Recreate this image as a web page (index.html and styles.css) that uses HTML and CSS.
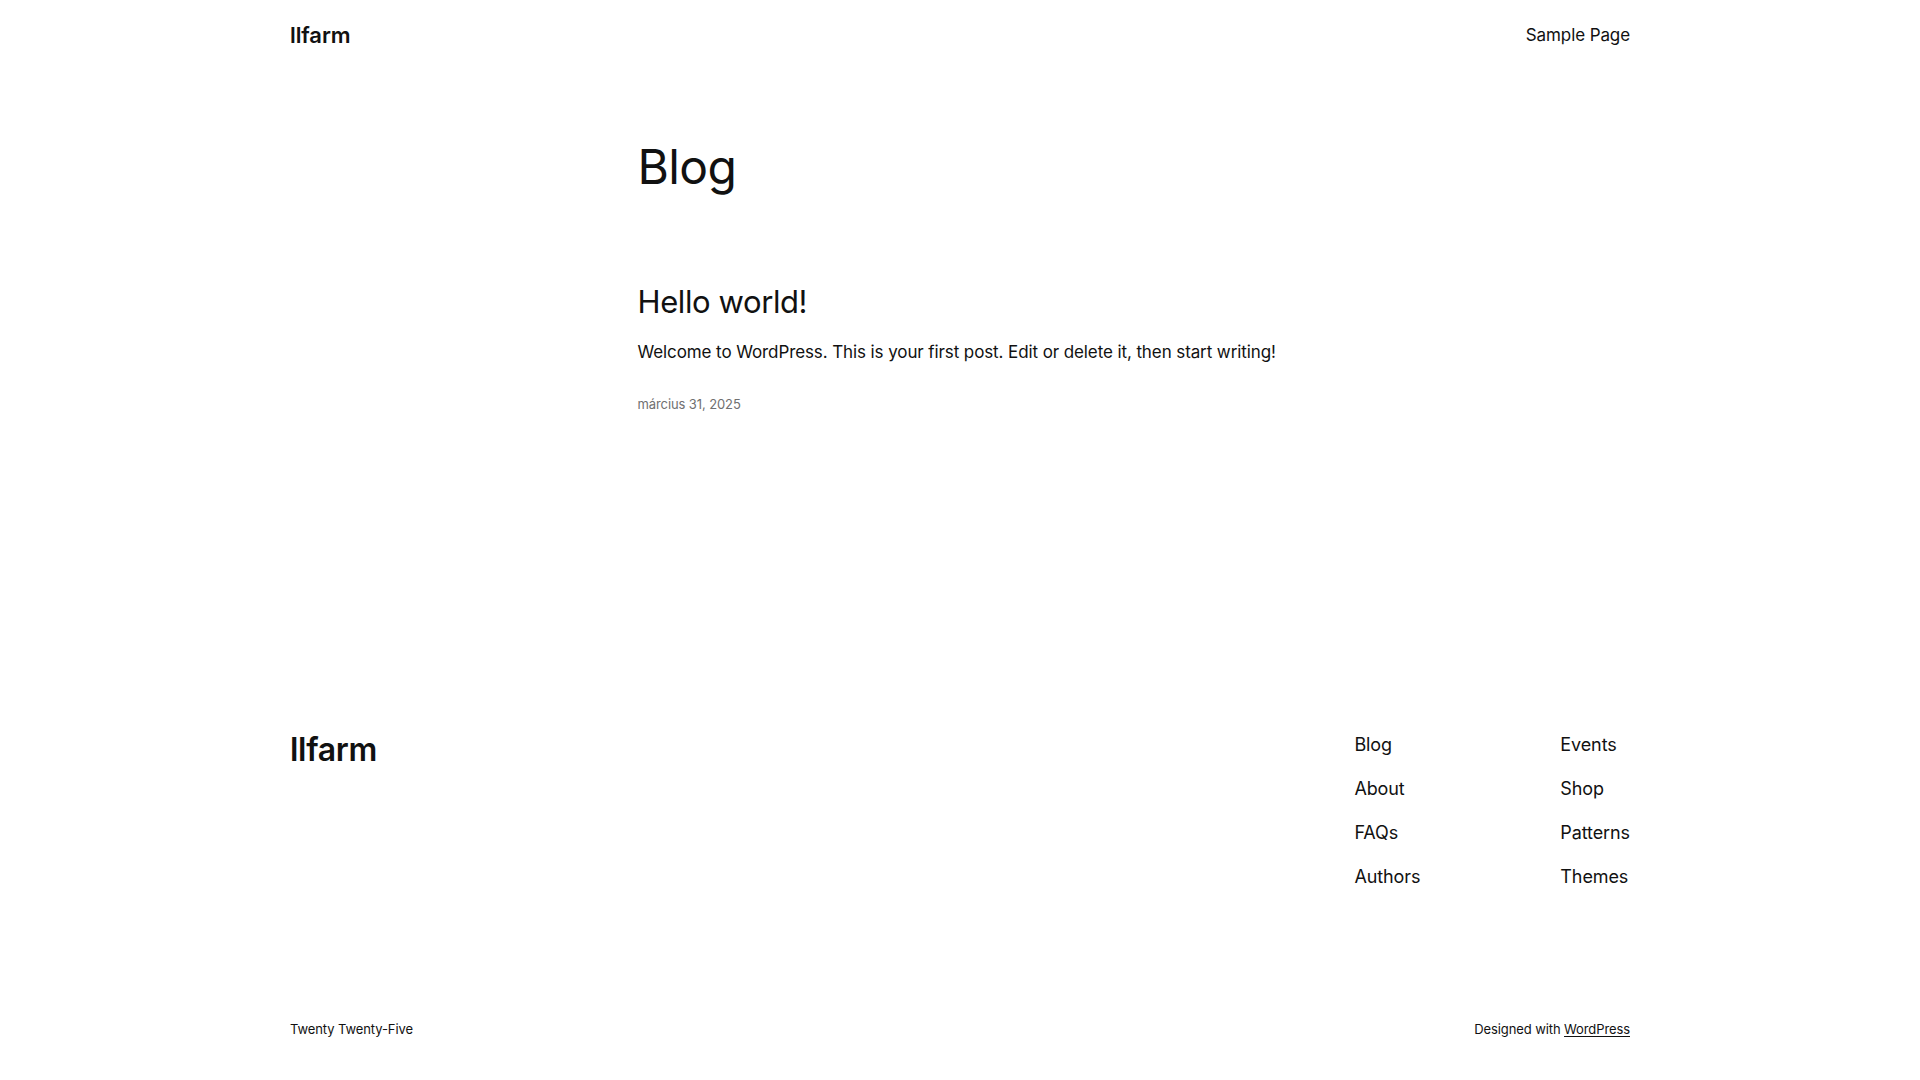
FILE: index.html
```html
<!DOCTYPE html>
<html lang="hu">
<head>
<meta charset="utf-8">
<title>llfarm – Blog</title>
<link rel="stylesheet" href="styles.css">
</head>
<body>
<div class="page">
  <header class="site-header">
    <div class="wide row">
      <a class="site-title" href="#">llfarm</a>
      <nav class="header-nav"><a href="#">Sample Page</a></nav>
    </div>
  </header>

  <main class="main">
    <div class="content">
      <h1 class="page-title">Blog</h1>
      <article class="post">
        <h2 class="post-title"><a href="#">Hello world!</a></h2>
        <p class="excerpt">Welcome to WordPress. This is your first post. Edit or delete it, then start writing!</p>
        <time class="post-date">március 31, 2025</time>
      </article>
    </div>
  </main>

  <footer class="site-footer">
    <div class="wide footer-top">
      <a class="footer-title" href="#">llfarm</a>
      <div class="footer-navs">
        <ul class="footer-nav">
          <li><a href="#">Blog</a></li>
          <li><a href="#">About</a></li>
          <li><a href="#">FAQs</a></li>
          <li><a href="#">Authors</a></li>
        </ul>
        <ul class="footer-nav">
          <li><a href="#">Events</a></li>
          <li><a href="#">Shop</a></li>
          <li><a href="#">Patterns</a></li>
          <li><a href="#">Themes</a></li>
        </ul>
      </div>
    </div>
    <div class="wide footer-bottom">
      <span>Twenty Twenty-Five</span>
      <span>Designed with <a class="u" href="#">WordPress</a></span>
    </div>
  </footer>
</div>
</body>
</html>
```

FILE: styles.css
```css
* { box-sizing: border-box; }
html, body { margin: 0; padding: 0; background: #fff; }
body {
  font-family: Inter, "Noto Sans", "Liberation Sans", sans-serif;
  color: #111111;
  letter-spacing: -0.1px;
  -webkit-font-smoothing: antialiased;
}
a { color: inherit; text-decoration: none; }

.wide { width: 1340px; margin: 0 auto; }
.row { display: flex; justify-content: space-between; align-items: center; }

.site-header { padding: 20px 0 19px; }
.site-title { font-size: 22px; font-weight: 600; line-height: 31px; }
.header-nav { font-size: 17px; line-height: 25px; font-weight: 400; }

.main { padding-top: 70px; }
.content { width: 645px; margin: 0 auto; }
.page-title { margin: 0; font-size: 48px; font-weight: 400; line-height: 54px; letter-spacing: -0.6px; }
.post { margin-top: 90px; }
.post-title { margin: 0; font-size: 31px; font-weight: 400; line-height: 36px; letter-spacing: -0.4px; }
.excerpt { margin: 20px 0 0; font-size: 17px; line-height: 25px; }
.post-date { display: block; margin-top: 30px; font-size: 13px; line-height: 18px; color: #707070; }

.site-footer { margin-top: 319px; }
.footer-top { display: flex; justify-content: space-between; align-items: flex-start; }
.footer-title { font-size: 32px; font-weight: 600; line-height: 44px; margin-top: -4px; letter-spacing: -0.3px; }
.footer-navs { display: flex; gap: 140px; }
.footer-nav { list-style: none; margin: 0; padding: 0; display: flex; flex-direction: column; gap: 19px; font-size: 18px; line-height: 25px; }
.footer-bottom { display: flex; justify-content: space-between; margin-top: 130px; padding-bottom: 40px; font-size: 13px; line-height: 20px; }
.u { text-decoration: underline; text-underline-offset: 2px; }
```
